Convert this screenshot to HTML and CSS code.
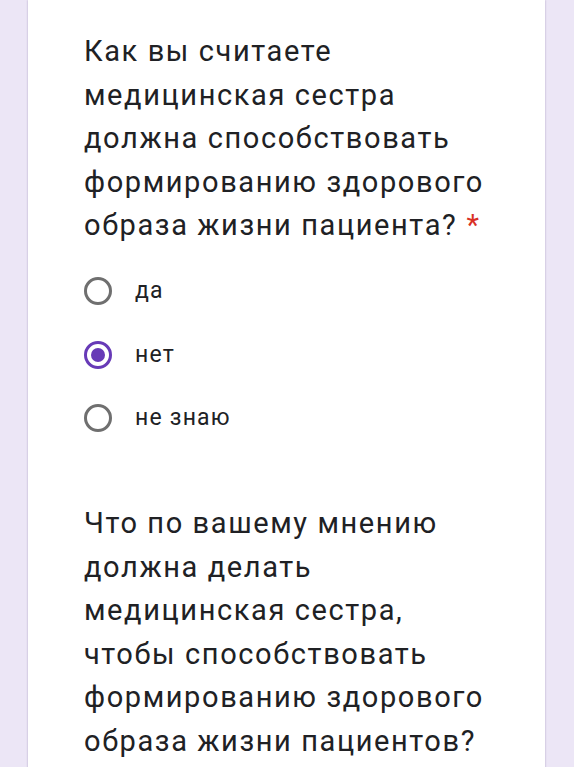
FILE: index.html
```html
<!DOCTYPE html>
<html lang="ru">
<head>
  <meta charset="UTF-8" />
  <meta name="viewport" content="width=device-width, initial-scale=1.0"/>
  <title>Анкета</title>
  <link rel="stylesheet" href="styles.css">
</head>
<body>
  <main class="form-card">
    <section class="question">
      <h2 class="question-title">Как вы считаете медицинская сестра должна способствовать формированию здорового образа жизни пациента?<span class="required">*</span></h2>
      <div class="options">
        <label class="option">
          <span class="radio"></span>
          <span class="option-text">да</span>
        </label>
        <label class="option">
          <span class="radio checked"></span>
          <span class="option-text">нет</span>
        </label>
        <label class="option">
          <span class="radio"></span>
          <span class="option-text">не знаю</span>
        </label>
      </div>
    </section>

    <section class="question">
      <h2 class="question-title">Что по вашему мнению должна делать медицинская сестра, чтобы способствовать формированию здорового образа жизни пациентов?</h2>
    </section>
  </main>
</body>
</html>
```

FILE: styles.css
```css
:root {
  --lavender: #ece6f6;
  --purple: #673ab7;
  --gray-ring: #6f6f6f;
  --text-dark: #202124;
  --red: #d93025;
  --white: #fff;
}

body {
  margin: 0;
  background-color: var(--lavender);
  font-family: Roboto, 'Noto Sans', sans-serif;
  color: var(--text-dark);
}

.form-card {
  margin: 0 29px 0 28px;
  min-height: 767px;
  background-color: var(--white);
  box-shadow: 0 0 2px rgba(60, 40, 100, 0.35);
  padding: 30px 53px 0 56px;
}

.question-title {
  margin: 0;
  font-size: 29px;
  font-weight: 400;
  line-height: 43.5px;
  letter-spacing: 1.6px;
}

.required {
  color: var(--red);
  margin-left: 9px;
}

.options {
  display: flex;
  flex-direction: column;
  margin-top: 12px;
  margin-bottom: 52px;
}

.option {
  display: flex;
  align-items: center;
  gap: 23px;
  height: 63.5px;
}

.radio {
  box-sizing: border-box;
  width: 28px;
  height: 28px;
  border: 3px solid var(--gray-ring);
  border-radius: 50%;
  display: flex;
  align-items: center;
  justify-content: center;
}

.radio.checked {
  border-color: var(--purple);
}

.radio.checked::after {
  content: '';
  width: 14px;
  height: 14px;
  border-radius: 50%;
  background-color: var(--purple);
}

.option-text {
  font-size: 23px;
  line-height: 28px;
  letter-spacing: 1.2px;
}
```
